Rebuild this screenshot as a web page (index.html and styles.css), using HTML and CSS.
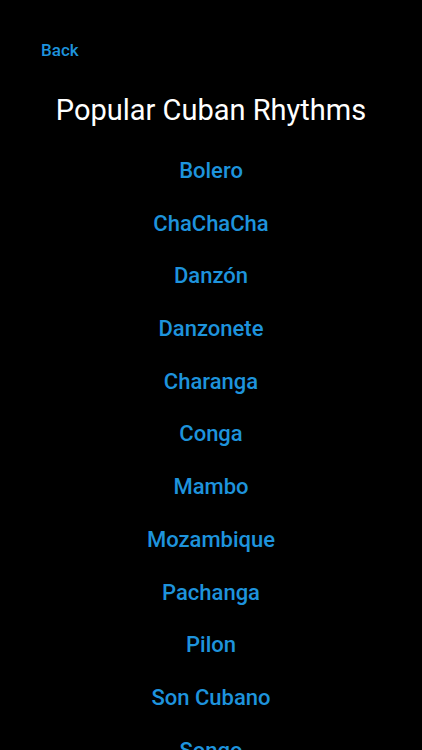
FILE: index.html
```html
<!DOCTYPE html>
<html>
<head>
<meta charset="utf-8">
<link rel="stylesheet" href="styles.css">
</head>
<body>
<div class="screen">
  <div class="topbar"><a class="back">Back</a></div>
  <h1 class="title">Popular Cuban Rhythms</h1>
  <ul class="list">
    <li>Bolero</li>
    <li>ChaChaCha</li>
    <li>Danzón</li>
    <li>Danzonete</li>
    <li>Charanga</li>
    <li>Conga</li>
    <li>Mambo</li>
    <li>Mozambique</li>
    <li>Pachanga</li>
    <li>Pilon</li>
    <li>Son Cubano</li>
    <li>Songo</li>
  </ul>
</div>
</body>
</html>
```
FILE: styles.css
```css
html, body {
  margin: 0;
  padding: 0;
  background: #000;
  height: 100%;
  overflow: hidden;
}
.screen {
  font-family: Roboto, "Noto Sans", sans-serif;
  color: #fff;
  display: flex;
  flex-direction: column;
}
.topbar {
  padding: 39px 0 0 41px;
  height: 22px;
}
.back {
  color: #1e93dc;
  font-size: 17px;
  font-weight: 500;
  line-height: 22px;
}
.title {
  margin: 0;
  padding-top: 31px;
  text-align: center;
  font-size: 29px;
  font-weight: 400;
  line-height: 36px;
}
.list {
  list-style: none;
  margin: 0;
  padding: 0;
  padding-top: 17px;
  display: flex;
  flex-direction: column;
}
.list li {
  text-align: center;
  color: #1e93dc;
  font-size: 22px;
  font-weight: 500;
  line-height: 52.7px;
  height: 52.7px;
}
```
